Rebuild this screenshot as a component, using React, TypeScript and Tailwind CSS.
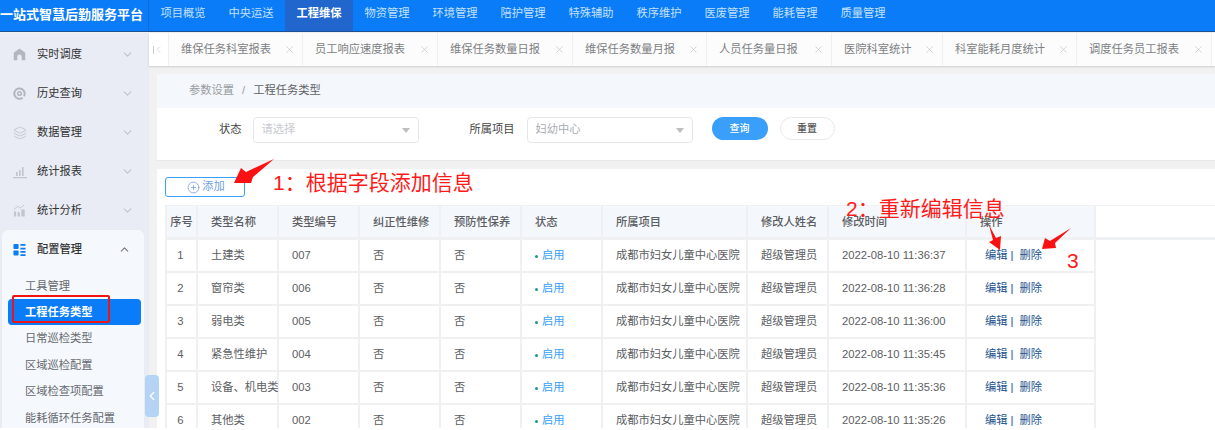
import { ChevronDown, ChevronUp, ChevronLeft, X, Layers, CirclePlus } from "lucide-react";

const font = "font-['Liberation_Sans','Noto_Sans_CJK_SC',sans-serif]";

const navItems = ["项目概览", "中央运送", "工程维保", "物资管理", "环境管理", "陪护管理", "特殊辅助", "秩序维护", "医废管理", "能耗管理", "质量管理"];
const tabs = [
  { name: "维保任务科室报表", w: "w-[134px]" },
  { name: "员工响应速度报表", w: "w-[135px]" },
  { name: "维保任务数量日报", w: "w-[135px]" },
  { name: "维保任务数量月报", w: "w-[134px]" },
  { name: "人员任务量日报", w: "w-[125px]" },
  { name: "医院科室统计", w: "w-[111px]" },
  { name: "科室能耗月度统计", w: "w-[134px]" },
  { name: "调度任务员工报表", w: "w-[135px]" },
];
const subItems = ["工具管理", "工程任务类型", "日常巡检类型", "区域巡检配置", "区域检查项配置", "能耗循环任务配置"];
const headers = ["序号", "类型名称", "类型编号", "纠正性维修", "预防性保养", "状态", "所属项目", "修改人姓名", "修改时间", "操作"];
const rows = [
  ["1", "土建类", "007", "2022-08-10 11:36:37"],
  ["2", "窗帘类", "006", "2022-08-10 11:36:28"],
  ["3", "弱电类", "005", "2022-08-10 11:36:00"],
  ["4", "紧急性维护", "004", "2022-08-10 11:35:45"],
  ["5", "设备、机电类", "003", "2022-08-10 11:35:36"],
  ["6", "其他类", "002", "2022-08-10 11:35:26"],
];

const gridCols = "grid grid-cols-[33px_81px_81px_81px_81px_81px_145px_81px_138px_129px]";

function HomeIcon() {
  return (
    <svg viewBox="0 0 14 14" className="size-[13px]" fill="#b3b6bf">
      <path d="M7 .6 12.6 4.6c.4.3.6.7.6 1.2v7.4H9.4V9.4a2.4 2.4 0 0 0-4.8 0v3.8H.8V5.8c0-.5.2-.9.6-1.2z" />
    </svg>
  );
}

function TargetIcon() {
  return (
    <svg viewBox="0 0 14 14" className="size-[13px]" fill="none" stroke="#b3b6bf" strokeWidth="2.2">
      <path d="M10.5 11.5A5.6 5.6 0 1 1 12.6 7c0 1-.3 2-.8 2.8" />
      <circle cx="7" cy="7" r="2" strokeWidth="1.6" />
    </svg>
  );
}

function ReportIcon() {
  return (
    <svg viewBox="0 0 14 14" className="size-[14px]" fill="#c2c5ce">
      <path d="M0 12h14v1.2H0zM3 7h1.6v4H3zM6 5h1.6v6H6zM9 2h1.6v9H9z" />
    </svg>
  );
}

function AnalysisIcon() {
  return (
    <svg viewBox="0 0 14 14" className="size-[13px]" fill="#c2c5ce">
      <path d="M1 8h2.4v5.4H1zM5 9h2.4v4.4H5zM9 6h3.6v7.4H9z" />
      <path d="M1 6 5 2.5l3 2 4-3.5" fill="none" stroke="#c2c5ce" strokeWidth="1" />
    </svg>
  );
}

function ConfigIcon() {
  return (
    <svg viewBox="0 0 14 14" className="size-[13px]" fill="#0a7cf8">
      <rect x="0.5" y="1" width="5.5" height="5.5" rx="1" />
      <rect x="0.5" y="8" width="5.5" height="5.5" rx="1" />
      <path d="M8 1h5.5v2H8zM8 5h5.5v2H8zM8 8.5h5.5v2H8zM8 12h5.5v2H8z" />
    </svg>
  );
}

function Select({ value, muted }: { value: string; muted?: boolean }) {
  return (
    <div className="flex h-[26px] w-[166px] items-center justify-between rounded-sm border border-[#e4e7ed] bg-white pl-2 pr-[6px]">
      <span className={muted ? "text-[#c8cacf]" : "text-[#a9acb2]"}>{value}</span>
      <span className="mr-[2px] h-0 w-0 border-x-[4px] border-t-[5px] border-x-transparent border-t-[#bcbec2]" />
    </div>
  );
}

function Cell({ children, center }: { children: React.ReactNode; center?: boolean }) {
  return (
    <div className={`flex h-[33px] items-center border-r-2 border-b-2 border-[#eff0f2] pt-[1px] ${center ? "justify-center pr-[2px]" : "pl-[13px]"} whitespace-nowrap text-[#5c5e63]`}>
      {children}
    </div>
  );
}

export default function App() {
  const sideItems = [
    { name: "实时调度", icon: <HomeIcon /> },
    { name: "历史查询", icon: <TargetIcon /> },
    { name: "数据管理", icon: <Layers size={14} color="#b9bcc6" strokeWidth={1.3} /> },
    { name: "统计报表", icon: <ReportIcon /> },
    { name: "统计分析", icon: <AnalysisIcon /> },
  ];

  return (
    <div className={`relative h-[428px] w-[1215px] overflow-hidden bg-[#f1f1f1] text-[11.25px] leading-none ${font}`}>
      <header className="flex h-[32px] items-stretch border-b border-[#1d4f94] bg-[#0a7cf8]">
        <div className="flex w-[149px] shrink-0 items-center whitespace-nowrap border-r border-[#0f6cd6] pb-[3px] text-[13px] font-bold text-white">
          一站式智慧后勤服务平台
        </div>
        {navItems.map((item) => (
          <div
            key={item}
            className={`flex w-[68px] items-center justify-center pb-[3px] ${item === "工程维保" ? "bg-[#2166cc] font-bold text-white" : "text-[#c4e0fd]"}`}
          >
            {item}
          </div>
        ))}
      </header>

      <div className="flex h-[396px] pt-[1px]">
        <aside className="w-[149px] shrink-0 overflow-hidden bg-[#e9ecf5] pt-[2px]">
          {sideItems.map((s) => (
            <div key={s.name} className="flex h-[39px] items-center pl-[13px] pr-[15px] text-[#333]">
              <span className="flex w-[24px] shrink-0">{s.icon}</span>
              <span className="flex-1">{s.name}</span>
              <ChevronDown size={13} color="#c0c3ca" />
            </div>
          ))}
          <div className="mx-[2px] w-[142px] rounded-t-md bg-[#f5f8fc]">
            <div className="flex h-[38px] items-center pl-[11px] pr-[13px] pt-[1px] text-[#333]">
              <span className="flex w-[24px] shrink-0"><ConfigIcon /></span>
              <span className="flex-1 font-medium">配置管理</span>
              <ChevronUp size={13} color="#777" />
            </div>
            <div className="pt-[4.6px]">
              {subItems.map((s) => (
                <div
                  key={s}
                  className={`ml-[6px] mr-[3px] flex h-[26.4px] items-center rounded-sm pl-[17px] pt-[1px] ${s === "工程任务类型" ? "bg-[#0a7cf8] font-bold text-white" : "text-[#666a70]"}`}
                >
                  {s}
                </div>
              ))}
            </div>
          </div>
        </aside>

        <main className="min-w-0 flex-1">
          <div className="flex h-[33px] items-stretch bg-white shadow-[0_1px_2px_rgba(0,0,0,0.15)]">
            <div className="flex w-[20px] shrink-0 items-center justify-center border-r border-[#efefef] text-[#c9c9c9]">
              <span className="-mr-[1px] h-[8px] w-px bg-[#c9c9c9]" />
              <ChevronLeft size={11} strokeWidth={1.5} />
            </div>
            {tabs.map((t) => (
              <div key={t.name} className={`flex ${t.w} shrink-0 items-center justify-between border-r border-[#efefef] bg-[#fcfcfc] pl-[12px] pr-[7px] text-[#7d7f83]`}>
                <span>{t.name}</span>
                <X size={11} color="#c3c3c3" strokeWidth={1.5} />
              </div>
            ))}
          </div>

          <div className="pl-[8px] pt-[8px]">
            <div className="flex h-[34px] items-center bg-[#f4f7fb] pl-[32px] text-[#999ca1]">
              参数设置<span className="mx-[8px]">/</span><span className="text-[#606266]">工程任务类型</span>
            </div>
            <div className="flex h-[53px] items-start border-b border-[#e9e9e9] bg-white pt-[9px]">
              <span className="ml-[62px] mr-[11px] flex h-[26px] items-center text-[#444]">状态</span>
              <Select value="请选择" muted />
              <span className="ml-[51px] mr-[12px] flex h-[26px] items-center text-[#444]">所属项目</span>
              <Select value="妇幼中心" />
              <button className="ml-[19px] h-[23px] w-[56px] rounded-full bg-[#3a9ffa] text-[10px] font-medium text-white">查询</button>
              <button className="ml-[12px] h-[23px] w-[55px] rounded-full border border-[#e8e8e8] bg-white text-[10px] font-medium text-[#555]">重置</button>
            </div>

            <div className="mt-[8px] h-[300px] bg-white pl-[8px] pt-[8px]">
              <button className="flex h-[20px] w-[80px] items-center justify-center gap-[2px] rounded-[3px] border border-[#3a9ffa] pl-[2px] text-[#6f9fe0]">
                <CirclePlus size={13} color="#7a9fdc" strokeWidth={1.5} />
                添加
              </button>
              <div className="mt-[8px] border-t border-[#eff0f2]">
                <div className={`${gridCols} h-[34px] border-b-[3px] border-[#eff0f2]`}>
                  {headers.map((h, i) => (
                    <div
                      key={h}
                      className={`flex items-center border-r-2 border-[#eff0f2] bg-[#f4f7fb] pt-[2px] font-medium text-[#5c5e63] ${i === 0 ? "justify-center border-l-2" : "pl-[13px]"}`}
                    >
                      {h}
                    </div>
                  ))}
                </div>
                {rows.map((r) => (
                  <div key={r[0]} className={gridCols}>
                    <div className="border-l-2 border-[#eff0f2]"><Cell center>{r[0]}</Cell></div>
                    <Cell>{r[1]}</Cell>
                    <Cell>{r[2]}</Cell>
                    <Cell>否</Cell>
                    <Cell>否</Cell>
                    <Cell>
                      <span className="mr-[4px] size-[3px] rounded-full bg-[#139a8b]" />
                      <span className="text-[#3a9ffa]">启用</span>
                    </Cell>
                    <Cell>成都市妇女儿童中心医院</Cell>
                    <Cell>超级管理员</Cell>
                    <Cell>{r[3]}</Cell>
                    <div className="flex h-[33px] items-center whitespace-nowrap border-r-2 border-b-2 border-[#eff0f2] pl-[18px] text-[#24548f]">
                      编辑<span className="ml-[3px] mr-[6px] text-[#1c4f96]">|</span>删除
                    </div>
                  </div>
                ))}
              </div>
            </div>
          </div>
        </main>
      </div>

      {/* collapse handle */}
      <div className="absolute left-[145px] top-[375px] flex h-[42px] w-[14px] items-center justify-center rounded-sm bg-[#b5d3f5]">
        <ChevronLeft size={14} color="#ffffff" strokeWidth={2} />
      </div>

      {/* annotations drawn over the page */}
      <div className="absolute left-[12px] top-[295px] h-[28px] w-[98px] rounded-[2px] border-2 border-[#f01414]" />
      <span className="absolute left-[273px] top-[172px] text-[21px] leading-[22px] text-[#ff1a1a]">1：根据字段添加信息</span>
      <span className="absolute left-[846px] top-[198px] text-[21px] leading-[22px] text-[#ff1a1a]">2：重新编辑信息</span>
      <span className="absolute left-[1067px] top-[250px] text-[21px] leading-[22px] text-[#ff1a1a]">3</span>
      <svg className="absolute left-0 top-0" width="1215" height="428" fill="#fa1111">
        <polygon points="234,183 241,168 246,172 274,159 253,177 251,183" />
        <polygon points="989,225 996,238 1001,236 1000,250 989,242 993,240" />
        <polygon points="1042,249 1045,238 1050,241 1071,228 1055,243 1056,248" />
      </svg>
    </div>
  );
}
